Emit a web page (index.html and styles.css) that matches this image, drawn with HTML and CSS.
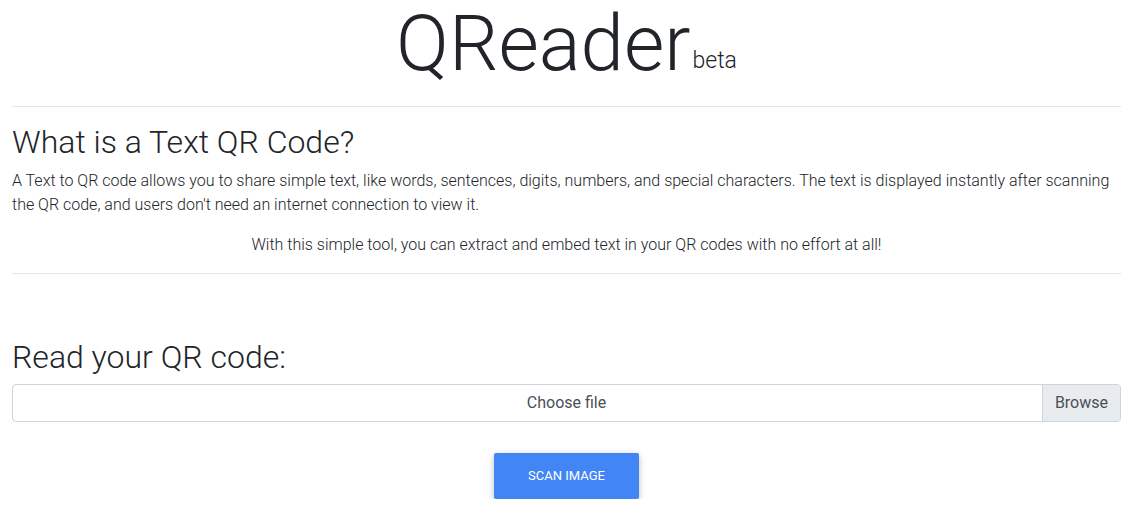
FILE: index.html
```html
<!DOCTYPE html>
<html lang="en">
<head>
    <meta charset="UTF-8">
    <meta name="viewport" content="width=device-width, initial-scale=1.0">
    <title>QReader beta</title>
    <link rel="stylesheet" href="styles.css">
</head>
<body>
    <div class="container">
        <h1 class="logo">QReader<small>beta</small></h1>
        <hr>
        <div class="about">
            <h2>What is a Text QR Code?</h2>
            <p>A Text to QR code allows you to share simple text, like words, sentences, digits, numbers, and special characters. The text is displayed instantly after scanning the QR code, and users don't need an internet connection to view it.</p>
            <p class="center">With this simple tool, you can extract and embed text in your QR codes with no effort at all!</p>
        </div>
        <hr>
        <div class="reader">
            <h2>Read your QR code:</h2>
            <label class="file">
                <input type="file" id="file">
                <span class="file-label">Choose file</span>
            </label>
            <div class="actions">
                <button class="btn">Scan image</button>
            </div>
        </div>
    </div>
</body>
</html>
```

FILE: styles.css
```css
*{
    box-sizing: border-box;
}
body{
    margin: 0;
    font-family: Roboto, "Liberation Sans", sans-serif;
    font-weight: 300;
    font-size: 16px;
    line-height: 1.5;
    color: #212529;
    background: #fff;
}
.container{
    padding: 0 4px 0 12px;
}
.logo{
    margin: -3px 0 0;
    text-align: center;
    font-size: 78px;
    font-weight: 300;
    line-height: 1.2;
}
.logo small{
    font-size: 23px;
    margin-left: 2px;
    vertical-align: 2px;
}
hr{
    margin: 15px 0 0;
    border: 0;
    border-top: 1px solid rgba(0,0,0,.1);
}
h2{
    margin: 16px 0 8px;
    font-size: 32px;
    font-weight: 300;
    line-height: 1.2;
}
p{
    margin: 0 0 16px;
}
.center{
    text-align: center;
}
.about + hr{
    margin-top: 0;
}
.reader h2{
    margin-top: 64px;
    margin-bottom: 8px;
}
.file{
    position: relative;
    display: block;
    height: 38px;
    border: 1px solid #ced4da;
    border-radius: 4px;
    overflow: hidden;
    color: #495057;
    cursor: pointer;
}
.file input{
    display: none;
}
.file-label{
    display: block;
    text-align: center;
    padding: 6px 12px;
    font-weight: 400;
}
/* the Browse part sits over the right end of the label */
.file::after{
    content: "Browse";
    position: absolute;
    top: 0;
    right: 0;
    bottom: 0;
    padding: 6px 12px;
    background: #e9ecef;
    border-left: 1px solid #ced4da;
    font-weight: 400;
}
.actions{
    text-align: center;
    padding-top: 31px;
}
.btn{
    font-family: Roboto, "Liberation Sans", sans-serif;
    font-size: 13px;
    font-weight: 400;
    line-height: 1.5;
    text-transform: uppercase;
    color: #fff;
    background: #4285f4;
    border: 0;
    border-radius: 2px;
    padding: 13px 34px;
    box-shadow: 0 2px 5px 0 rgba(0,0,0,.16), 0 2px 10px 0 rgba(0,0,0,.12);
    cursor: pointer;
}
```
